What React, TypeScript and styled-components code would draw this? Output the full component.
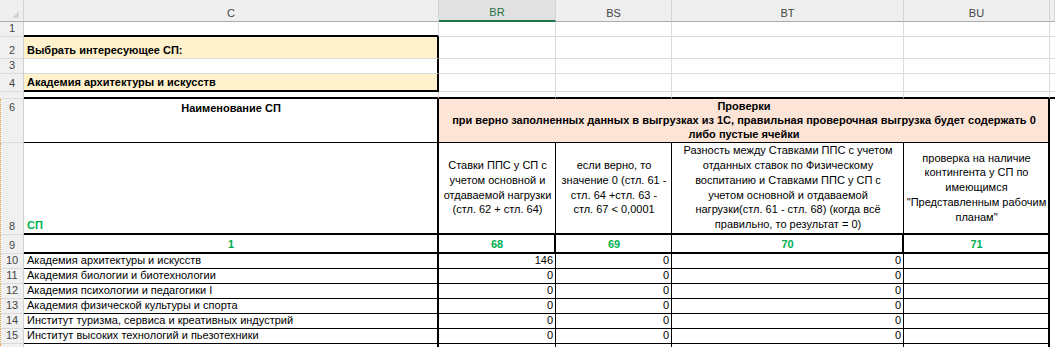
import React from 'react';
import styled, { createGlobalStyle } from 'styled-components';

const GlobalStyle = createGlobalStyle`
  html, body { margin: 0; padding: 0; background: #fff; }
  body { font-family: "Liberation Sans", Arial, sans-serif; overflow: hidden; }
`;

const COLS = '24px 415px 117px 116px 232px 146px 5px';
const GREEN = '#00b050';
const CREAM = '#fff2cc';
const PEACH = '#fce4d6';

type Edge = 'grid' | 'thin' | 'thick' | 'none';
const edge = (e: Edge = 'grid') =>
  e === 'thick' ? '2px solid #000' : e === 'thin' ? '1px solid #000' : e === 'none' ? '0' : '1px solid #dcdcdc';

const Sheet = styled.div`
  width: 1055px;
  height: 347px;
  overflow: hidden;
  display: flex;
  flex-direction: column;
`;

const Row = styled.div<{ $h: number }>`
  display: grid;
  grid-template-columns: ${COLS};
  height: ${p => p.$h}px;
  flex: none;
`;

const Corner = styled.div`
  position: relative;
  box-sizing: border-box;
  background: #efefef;
  border-right: 1px solid #d4d4d4;
  border-bottom: 1px solid #ababab;
  &::after {
    content: '';
    position: absolute;
    right: 4px;
    bottom: 3px;
    width: 0;
    height: 0;
    border-left: 7px solid transparent;
    border-bottom: 7px solid #d2d2d2;
  }
`;

const ColHead = styled.div<{ $sel?: boolean }>`
  box-sizing: border-box;
  display: flex;
  align-items: center;
  justify-content: center;
  padding-top: 4px;
  background: ${p => (p.$sel ? '#e1e1e1' : '#efefef')};
  border-right: 1px solid #d4d4d4;
  border-bottom: ${p => (p.$sel ? '2px solid #217346' : '1px solid #ababab')};
  color: ${p => (p.$sel ? '#217346' : '#444')};
  font-size: 11px;
  overflow: hidden;
`;

const RowHead = styled.div<{ $top?: boolean; $brk?: boolean }>`
  box-sizing: border-box;
  display: flex;
  justify-content: center;
  align-items: ${p => (p.$top ? 'flex-start' : 'flex-end')};
  padding: ${p => (p.$top ? '2px 0 0' : '0 0 1px')};
  background: #f0f0f0;
  border-right: 1px solid #cfcfcf;
  border-bottom: 1px solid #dadada;
  border-left: ${p => (p.$brk ? '1px dotted #e3a04a' : '1px solid #f0f0f0')};
  color: #444;
  font-size: 11px;
  line-height: 13px;
  overflow: hidden;
`;

const Cell = styled.div<{
  $r?: Edge;
  $b?: Edge;
  $bg?: string;
  $h?: 'left' | 'center' | 'right';
  $v?: 'top' | 'center' | 'bottom';
  $bold?: boolean;
  $color?: string;
  $span?: number;
  $lh?: number;
}>`
  box-sizing: border-box;
  display: flex;
  flex-direction: column;
  grid-column: span ${p => p.$span ?? 1};
  justify-content: ${p => (p.$v === 'top' ? 'flex-start' : p.$v === 'center' ? 'center' : 'flex-end')};
  align-items: ${p => (p.$h === 'center' ? 'center' : p.$h === 'right' ? 'flex-end' : 'flex-start')};
  text-align: ${p => p.$h ?? 'left'};
  border-right: ${p => edge(p.$r)};
  border-bottom: ${p => edge(p.$b)};
  background: ${p => p.$bg ?? '#fff'};
  color: ${p => p.$color ?? '#000'};
  font-weight: ${p => (p.$bold ? 700 : 400)};
  font-size: 11px;
  line-height: ${p => p.$lh ?? 13}px;
  padding: ${p => (p.$v === 'top' ? '3px 2px 0 3px' : '0 2px 1px 3px')};
  white-space: nowrap;
  overflow: hidden;
`;

const Line = styled.span`
  display: block;
`;

const Gap = styled.span<{ $h: number }>`
  display: block;
  height: ${p => p.$h}px;
`;

const Tick = styled.span<{ $c?: string; $w?: number }>`
  display: block;
  width: ${p => p.$w ?? 2}px;
  height: 2px;
  margin-left: 2px;
  background: ${p => p.$c ?? '#333'};
`;

const rows10 = [
  ['10', 'Академия архитектуры и искусств', '146', '0', '0'],
  ['11', 'Академия биологии и биотехнологии', '0', '0', '0'],
  ['12', 'Академия психологии и педагогики I', '0', '0', '0'],
  ['13', 'Академия физической культуры и спорта', '0', '0', '0'],
  ['14', 'Институт туризма, сервиса и креативных индустрий', '0', '0', '0'],
  ['15', 'Институт высоких технологий и пьезотехники', '0', '0', '0'],
];

const Lines: React.FC<{ items: string[] }> = ({ items }) => (
  <>
    {items.map((t, i) => (
      <Line key={i}>{t}</Line>
    ))}
  </>
);

export default function App() {
  return (
    <Sheet>
      <GlobalStyle />
      <Row $h={22}>
        <Corner />
        <ColHead>C</ColHead>
        <ColHead $sel>BR</ColHead>
        <ColHead>BS</ColHead>
        <ColHead>BT</ColHead>
        <ColHead>BU</ColHead>
        <ColHead />
      </Row>

      <Row $h={15}>
        <RowHead>1</RowHead>
        <Cell $b="thick" />
        <Cell />
        <Cell />
        <Cell />
        <Cell />
        <Cell />
      </Row>

      <Row $h={22}>
        <RowHead>2</RowHead>
        <Cell $bg={CREAM} $r="thick" $bold>Выбрать интересующее СП:</Cell>
        <Cell />
        <Cell />
        <Cell />
        <Cell />
        <Cell />
      </Row>

      <Row $h={15}>
        <RowHead>3</RowHead>
        <Cell $r="thick" />
        <Cell />
        <Cell />
        <Cell />
        <Cell />
        <Cell />
      </Row>

      <Row $h={18}>
        <RowHead>4</RowHead>
        <Cell $bg={CREAM} $r="thick" $b="thick" $bold>Академия архитектуры и искусств</Cell>
        <Cell />
        <Cell />
        <Cell />
        <Cell />
        <Cell />
      </Row>

      <Row $h={7}>
        <RowHead />
        <Cell $b="thick" />
        <Cell $b="thick" />
        <Cell $b="thick" />
        <Cell $b="thick" />
        <Cell $b="thick" />
        <Cell $b="thick" $r="none" />
      </Row>

      <Row $h={44}>
        <RowHead $top $brk>6</RowHead>
        <Cell $r="thick" $b="thin" $h="center" $v="top" $bold>Наименование СП</Cell>
        <Cell $span={4} $r="thick" $b="thin" $bg={PEACH} $h="center" $v="center" $bold $lh={14}>
          <Lines
            items={[
              'Проверки',
              'при верно заполненных данных в выгрузках из 1С, правильная проверочная выгрузка будет содержать 0',
              'либо пустые ячейки',
            ]}
          />
        </Cell>
        <Cell $r="none" $b="none" $v="top">
          <Tick $w={3} />
        </Cell>
      </Row>

      <Row $h={92}>
        <RowHead $brk>8</RowHead>
        <Cell $r="thick" $b="thick" $bold $color={GREEN}>СП</Cell>
        <Cell $r="thin" $b="thick" $h="center" $v="center" $lh={14.8}>
          <Lines items={['Ставки ППС у СП с', 'учетом основной и', 'отдаваемой нагрузки', '(стл. 62 + стл. 64)']} />
        </Cell>
        <Cell $r="thin" $b="thick" $h="center" $v="center" $lh={14.8}>
          <Lines items={['если верно, то', 'значение 0 (стл. 61 -', 'стл. 64 +стл. 63 -', 'стл. 67 < 0,0001']} />
        </Cell>
        <Cell $r="thin" $b="thick" $h="center" $v="center" $lh={14.8}>
          <Lines
            items={[
              'Разность между Ставками ППС с учетом',
              'отданных ставок по Физическому',
              'воспитанию  и Ставками ППС у СП с',
              'учетом основной и отдаваемой',
              'нагрузки(стл. 61 - стл. 68) (когда всё',
              'правильно, то результат = 0)',
            ]}
          />
        </Cell>
        <Cell $r="thick" $b="thick" $h="center" $v="center" $lh={14.8}>
          <Lines
            items={['проверка на наличие', 'контингента у СП по', 'имеющимся', '"Представленным рабочим', 'планам"']}
          />
        </Cell>
        <Cell $r="none" $b="none" $v="center">
          <Tick />
          <Gap $h={30} />
          <Tick $c="#f2c46d" $w={3} />
        </Cell>
      </Row>

      <Row $h={19}>
        <RowHead $brk>9</RowHead>
        <Cell $r="thick" $b="thick" $h="center" $bold $color={GREEN}>1</Cell>
        <Cell $r="thick" $b="thick" $h="center" $bold $color={GREEN}>68</Cell>
        <Cell $r="thin" $b="thick" $h="center" $bold $color={GREEN}>69</Cell>
        <Cell $r="thick" $b="thick" $h="center" $bold $color={GREEN}>70</Cell>
        <Cell $r="thick" $b="thick" $h="center" $bold $color={GREEN}>71</Cell>
        <Cell $r="none" $b="none" $v="top">
          <Tick $c="#d04040" $w={2} />
        </Cell>
      </Row>

      {rows10.map(([n, name, a, b, c]) => (
        <Row $h={15} key={n}>
          <RowHead $brk>{n}</RowHead>
          <Cell $r="thick" $b="thin">{name}</Cell>
          <Cell $r="thin" $b="thin" $h="right">{a}</Cell>
          <Cell $r="thin" $b="thin" $h="right">{b}</Cell>
          <Cell $r="thin" $b="thin" $h="right">{c}</Cell>
          <Cell $r="thick" $b="thin" />
          <Cell $r="none" $b="none" $v="center">
            <Tick />
          </Cell>
        </Row>
      ))}

      <Row $h={4}>
        <RowHead $brk />
        <Cell $r="thick" $b="none" />
        <Cell $r="thin" $b="none" />
        <Cell $r="thin" $b="none" />
        <Cell $r="thin" $b="none" />
        <Cell $r="thick" $b="none" />
        <Cell $r="none" $b="none" />
      </Row>
    </Sheet>
  );
}
